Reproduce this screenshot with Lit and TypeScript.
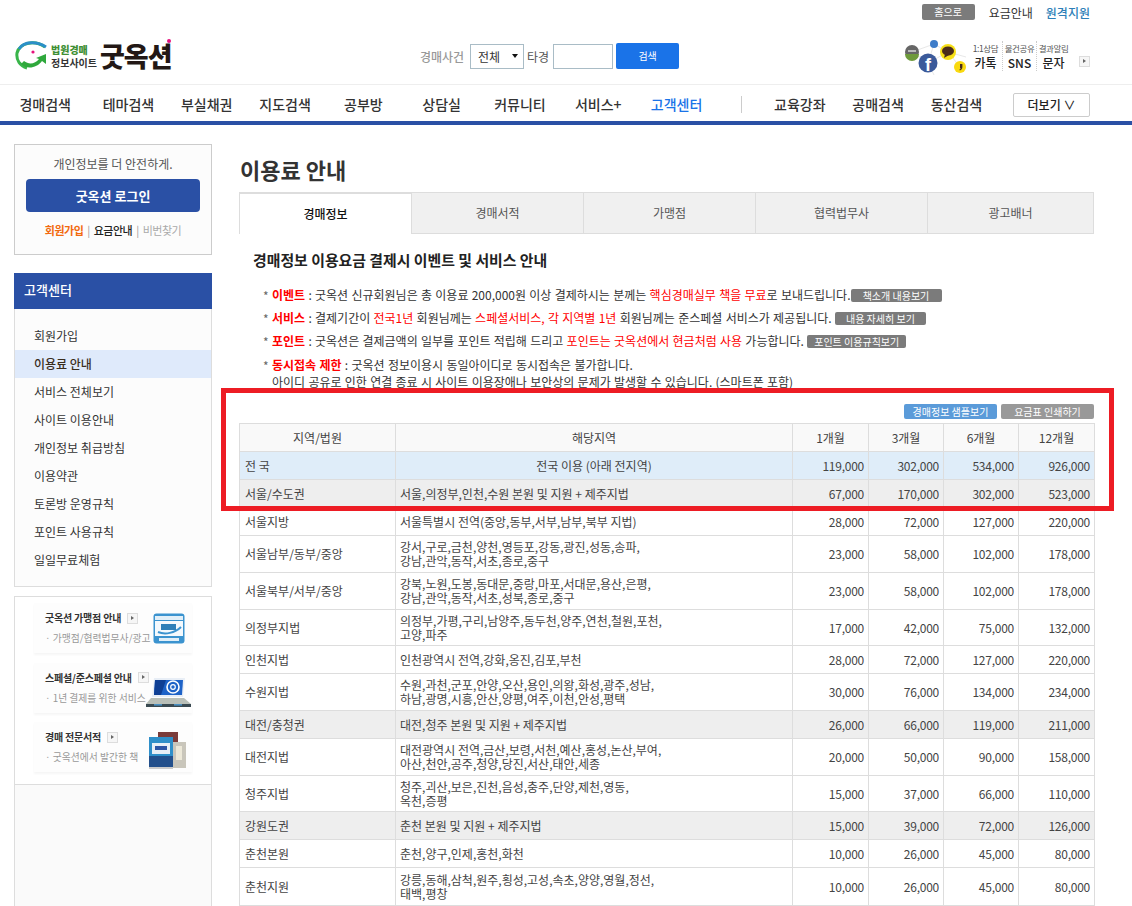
import { LitElement, css, html } from 'lit'
import { customElement } from 'lit/decorators.js'

const navLeft = ['경매검색', '테마검색', '부실채권', '지도검색', '공부방', '상담실', '커뮤니티', '서비스+', '고객센터']
const navRight = ['교육강좌', '공매검색', '동산검색']
const menu = ['회원가입', '이용료 안내', '서비스 전체보기', '사이트 이용안내', '개인정보 취급방침', '이용약관', '토론방 운영규칙', '포인트 사용규칙', '일일무료체험']
const tabs = ['경매정보', '경매서적', '가맹점', '협력법무사', '광고배너']

// kind: '' 일반, all 전국, area 권역
const rows = [
  ['all', '전 국', ['전국 이용 (아래 전지역)'], '119,000', '302,000', '534,000', '926,000'],
  ['area', '서울/수도권', ['서울,의정부,인천,수원 본원 및 지원 + 제주지법'], '67,000', '170,000', '302,000', '523,000'],
  ['', '서울지방', ['서울특별시 전역(중앙,동부,서부,남부,북부 지법)'], '28,000', '72,000', '127,000', '220,000'],
  ['', '서울남부/동부/중앙', ['강서,구로,금천,양천,영등포,강동,광진,성동,송파,', '강남,관악,동작,서초,종로,중구'], '23,000', '58,000', '102,000', '178,000'],
  ['', '서울북부/서부/중앙', ['강북,노원,도봉,동대문,중랑,마포,서대문,용산,은평,', '강남,관악,동작,서초,성북,종로,중구'], '23,000', '58,000', '102,000', '178,000'],
  ['short', '의정부지법', ['의정부,가평,구리,남양주,동두천,양주,연천,철원,포천,', '고양,파주'], '17,000', '42,000', '75,000', '132,000'],
  ['', '인천지법', ['인천광역시 전역,강화,옹진,김포,부천'], '28,000', '72,000', '127,000', '220,000'],
  ['', '수원지법', ['수원,과천,군포,안양,오산,용인,의왕,화성,광주,성남,', '하남,광명,시흥,안산,양평,여주,이천,안성,평택'], '30,000', '76,000', '134,000', '234,000'],
  ['area', '대전/충청권', ['대전,청주 본원 및 지원 + 제주지법'], '26,000', '66,000', '119,000', '211,000'],
  ['', '대전지법', ['대전광역시 전역,금산,보령,서천,예산,홍성,논산,부여,', '아산,천안,공주,청양,당진,서산,태안,세종'], '20,000', '50,000', '90,000', '158,000'],
  ['short', '청주지법', ['청주,괴산,보은,진천,음성,충주,단양,제천,영동,', '옥천,증평'], '15,000', '37,000', '66,000', '110,000'],
  ['area', '강원도권', ['춘천 본원 및 지원 + 제주지법'], '15,000', '39,000', '72,000', '126,000'],
  ['', '춘천본원', ['춘천,양구,인제,홍천,화천'], '10,000', '26,000', '45,000', '80,000'],
  ['tall', '춘천지원', ['강릉,동해,삼척,원주,횡성,고성,속초,양양,영월,정선,', '태백,평창'], '10,000', '26,000', '45,000', '80,000'],
] as [string, string, string[], string, string, string, string][]

@customElement('app-root')
export class AppRoot extends LitElement {
  static styles = css`
    :host {
      display: block;
      position: relative;
      width: 1132px;
      height: 906px;
      overflow: hidden;
      background: #fff;
      color: #333;
      font-family: "Noto Sans CJK KR", "Noto Sans", sans-serif;
      font-size: 12px;
      line-height: 17px;
    }
    .top {
      display: flex;
      justify-content: flex-end;
      align-items: center;
      gap: 13px;
      height: 24px;
      padding-right: 42px;
      box-sizing: border-box;
    }
    .home {
      width: 53px;
      height: 16px;
      margin-right: 1px;
      border-radius: 2px;
      background: #7b7b7b;
      color: #fff;
      font-size: 10px;
      line-height: 16px;
      text-align: center;
    }
    .remote { color: #2d7fb8; font-weight: 500; }
    .brand {
      display: flex;
      align-items: center;
      box-sizing: border-box;
      height: 61px;
      padding: 4px 42px 0 15px;
      border-bottom: 1px solid #eee;
    }
    .logo { display: flex; align-items: center; width: 405px; height: 34px; position: relative; }
    .logo-sub { margin-left: 4px; font-size: 10px; line-height: 13px; font-weight: 700; color: #333; }
    .logo-sub b { display: block; color: #3f8f35; }
    .logo-name { margin-left: 3px; font-size: 27px; line-height: 34px; font-weight: 900; color: #231815; letter-spacing: -1px; }
    .logo-dot { position: absolute; left: 152px; top: 0; width: 4px; height: 4px; border-radius: 50%; background: #e6117d; }
    .search { display: flex; align-items: center; }
    .search-label { color: #999; font-weight: 500; width: 50px; }
    .select {
      display: flex;
      align-items: center;
      justify-content: space-between;
      box-sizing: border-box;
      width: 54px;
      height: 25px;
      padding: 0 5px 0 7px;
      border: 1px solid #a9bcc6;
      color: #333;
    }
    .select i { border: 3px solid transparent; border-top: 4px solid #111; border-bottom: 0; }
    .ta { margin: 0 4px 0 3px; color: #555; }
    .input { box-sizing: border-box; width: 60px; height: 25px; border: 1px solid #a9bcc6; }
    .go {
      width: 63px;
      height: 26px;
      margin-left: 3px;
      border-radius: 2px;
      background: #1a73e8;
      color: #fff;
      font-size: 10px;
      line-height: 26px;
      text-align: center;
    }
    .sns { display: flex; align-items: center; margin-left: auto; }
    .sns-col { width: 33px; padding-top: 1px; text-align: center; border-right: 1px dotted #ccc; }
    .sns-col:last-of-type { border-right: 0; }
    .sns-col small { display: block; font-size: 8.5px; line-height: 12px; color: #555; letter-spacing: -0.4px; white-space: nowrap; }
    .sns-col b { display: block; font-size: 12px; line-height: 17px; font-weight: 500; color: #222; }
    .sns-more { margin: 10px 0 0 9px; }
    .more-btn {
      display: inline-block;
      box-sizing: border-box;
      width: 11px;
      height: 11px;
      border: 1px solid #ddd;
      background: #f6f6f6;
      position: relative;
    }
    .more-btn::after {
      content: '';
      position: absolute;
      left: 3px;
      top: 2px;
      border: 2.5px solid transparent;
      border-left: 3px solid #666;
      border-right: 0;
    }
    .nav {
      display: flex;
      align-items: center;
      height: 33px;
      padding: 3px 42px 0 6px;
      border-bottom: 4px solid #2a50a5;
      font-size: 14px;
      font-weight: 500;
      color: #333;
    }
    .nav a { flex: none; width: 78.3px; text-align: center; white-space: nowrap; }
    .nav a:nth-child(2) { margin-left: 5px; }
    .nav a.on { color: #1a73e8; }
    .nav .sep { width: 1px; height: 17px; margin: 0 19px 0 25px; background: #ccc; }
    .nav .more-nav {
      box-sizing: border-box;
      width: 77px;
      height: 24px;
      margin-left: auto;
      border: 1px solid #ccc;
      border-radius: 2px;
      font-size: 12px;
      line-height: 22px;
      text-align: center;
      color: #222;
    }
    .body { display: flex; padding-left: 14px; }
    .side { flex: none; width: 198px; margin: 19px 27px 0 0; }
    .login {
      box-sizing: border-box;
      height: 111px;
      padding-top: 10px;
      border: 1px solid #ccc;
      background: #fcfcfc;
      text-align: center;
      color: #555;
    }
    .login-btn {
      height: 33px;
      margin: 7px 11px 10px;
      border-radius: 4px;
      background: #2a50a5;
      color: #fff;
      font-size: 13px;
      font-weight: 700;
      line-height: 33px;
    }
    .login-links { font-size: 11px; letter-spacing: -0.5px; color: #999; }
    .login-links i { margin: 0 2px; font-style: normal; }
    .login-links .o { color: #f26a0f; font-weight: 700; }
    .login-links .d { color: #222; font-weight: 500; }
    .login-links .g { color: #aaa; }
    .side-title {
      height: 36px;
      margin-top: 18px;
      padding-left: 10px;
      background: #2a50a5;
      color: #fff;
      font-size: 13px;
      font-weight: 500;
      line-height: 34px;
    }
    .menu {
      height: 278px;
      box-sizing: border-box;
      padding-top: 13px;
      border: 1px solid #ddd;
      border-top: 0;
      background: #fcfcfc;
    }
    .menu a { display: block; height: 28px; padding-left: 19px; line-height: 28px; color: #333; }
    .menu a.on { background: #dfeafb; font-weight: 500; color: #3a2d1c; }
    .promo {
      box-sizing: border-box;
      height: 189px;
      margin-top: 9px;
      padding: 6px 19px 0;
      border: 1px solid #ddd;
    }
    .promo-row {
      position: relative;
      height: 50px;
      margin-bottom: 9.5px;
      background: #fdfdfd;
      box-shadow: 0 2px 2px #f6f6f6;
      font-size: 9.8px;
      line-height: 14px;
    }
    .promo-row b { display: flex; align-items: center; gap: 6px; padding: 8px 0 6px 11px; font-size: 10px; color: #333; white-space: nowrap; letter-spacing: -0.2px; }
    .promo-row span { display: block; padding-left: 11px; color: #999; white-space: nowrap; }
    .promo-row svg { position: absolute; }
    .promo-rest { height: 125px; border: 1px solid #ddd; border-top: 0; background: #fafafa; }
    .main { flex: none; width: 855px; }
    h1 { margin: 29px 0 0 1px; height: 38px; font-size: 22px; line-height: 30px; font-weight: 700; color: #333; }
    .tabs { display: flex; height: 42px; }
    .tabs a {
      box-sizing: border-box;
      width: 172px;
      border: 1px solid #ddd;
      border-left: 0;
      background: #f0f0f0;
      line-height: 40px;
      text-align: center;
      color: #555;
    }
    .tabs a:last-child { width: 166px; }
    .tabs a.on {
      width: 173px;
      border-left: 1px solid #ddd;
      border-bottom: 0;
      border-top-width: 2px;
      background: #fff;
      color: #111;
      font-weight: 500;
    }
    h2 { margin: 14px 0 0 14px; height: 24px; font-size: 14.9px; line-height: 24px; font-weight: 700; color: #222; }
    .notes { margin: 14px 0 0 24px; word-spacing: 0.6px; }
    .note { position: relative; margin-bottom: 6px; padding-left: 9px; white-space: nowrap; }
    .note.last { margin-top: 7px; }
    .note::before { content: '*'; position: absolute; left: 0; top: 1px; color: #666; }
    .note em { font-style: normal; color: #f00; }
    .note strong { color: #f00; font-weight: 700; }
    .tag {
      display: inline-block;
      box-sizing: border-box;
      min-width: 91px;
      height: 13px;
      padding: 0 7px;
      border-radius: 2px;
      background: #7b7b7b;
      color: #fff;
      font-size: 10px;
      line-height: 13px;
      text-align: center;
      word-spacing: 0;
    }
    .tools { display: flex; justify-content: flex-end; gap: 4px; margin-top: 14px; }
    .tools a {
      width: 93px;
      height: 15px;
      border-radius: 2px;
      background: #999;
      color: #fff;
      font-size: 10px;
      line-height: 15px;
      text-align: center;
    }
    .tools a.blue { background: #5b9bd9; }
    table { width: 855px; margin-top: 4px; border-collapse: collapse; table-layout: fixed; color: #444; }
    th, td { border: 1px solid #ddd; padding: 0 4px; height: 27px; line-height: 14px; }
    th { background: #f9f9f9; font-weight: 400; text-align: center; }
    td.name { padding-left: 5px; }
    td.num { text-align: right; letter-spacing: -0.25px; }
    tr.all td { background: #dfedf9; }
    tr.area td { background: #eee; }
    td.center { text-align: center; }
    tr.two td { height: 36px; }
    tr.short td { height: 35px; }
    tr.tall td { height: 37px; }
    .outline {
      position: absolute;
      left: 221px;
      top: 388px;
      box-sizing: border-box;
      width: 893px;
      height: 123px;
      border: 5px solid #ed1c24;
      pointer-events: none;
    }
  `

  logoIcon() {
    return html`<svg width="32" height="30" viewBox="0 0 32 30">
      <path d="M30 6 C20 -1 5 1 2 12 C1 19 5 25 12 27" fill="none" stroke="#39b54a" stroke-width="3"/>
      <path d="M31 6 C22 0 9 0 4 8" fill="none" stroke="#2b8fc9" stroke-width="3"/>
      <path d="M9 20 C14 24 20 23 24 18 L21 17 L31 13 L31 23 L27 20 C22 27 12 29 6 23 Z" fill="#2fa83c"/>
      <circle cx="18" cy="11" r="1.6" fill="#e6117d"/>
    </svg>`
  }

  snsIcons() {
    return html`<svg width="65" height="38" viewBox="0 0 65 38">
      <path d="M8 15 L30 7 M8 15 L24 26 M30 7 L24 26 M44 15 L24 26 M44 15 L56 30 M30 7 L44 15 M24 26 L30 38 M44 15 L62 20" stroke="#e8e8e8" fill="none"/>
      <circle cx="8" cy="15" r="7" fill="#666"/>
      <path d="M1 17 A7 7 0 0 0 15 17 Z" fill="#6f9a3c"/>
      <rect x="4" y="13" width="8" height="2" fill="#bbb"/>
      <circle cx="30" cy="7" r="4" fill="#3d7cc9"/>
      <circle cx="24" cy="26" r="9.5" fill="#3b5a9a"/>
      <text x="21" y="34" font-family="Liberation Sans" font-weight="700" font-size="18" fill="#fff">f</text>
      <circle cx="44" cy="15" r="8" fill="#f7e017"/>
      <ellipse cx="44" cy="14" rx="6" ry="4.6" fill="#4a2c1b"/>
      <path d="M41 17 L40 21 L45 18 Z" fill="#4a2c1b"/>
      <circle cx="56" cy="30" r="6" fill="#f9d90f"/>
      <path d="M56 27 h2.4 v3 c0 2 -1 3 -2.6 3.4 l-0.4 -0.9 c.8 -.4 1.2 -1 1.2 -1.6 h-0.6 Z" fill="#4a2c1b"/>
    </svg>`
  }

  cardIcon() {
    return html`<svg style="left:119px;top:10px" width="32" height="31" viewBox="0 0 32 31">
      <rect x="0.5" y="0.5" width="31" height="30" rx="3" fill="#3b93cf"/>
      <rect x="2" y="3" width="28" height="4" fill="#fff" opacity=".85"/>
      <rect x="2" y="8" width="28" height="15" fill="#f4f9fd"/>
      <path d="M5 19 C12 22 22 20 28 14" stroke="#3b93cf" stroke-width="2" fill="none"/>
      <rect x="8" y="11" width="15" height="6" fill="#2f7fb8"/>
      <rect x="6" y="25" width="20" height="3" fill="#fff" opacity=".85"/>
    </svg>`
  }

  laptopIcon() {
    return html`<svg style="left:112px;top:14px" width="45" height="31" viewBox="0 0 45 31">
      <path d="M8 1 H39 L37 20 H6 Z" fill="#e8eef6"/>
      <path d="M9 3 H37 L36 18 H8 Z" fill="#1e63c8"/>
      <path d="M9 3 H20 L15 18 H8 Z" fill="#0f3f94"/>
      <circle cx="27" cy="10" r="6" fill="none" stroke="#fff" stroke-width="1.6"/>
      <circle cx="27" cy="10" r="2.3" fill="none" stroke="#fff" stroke-width="1.2"/>
      <path d="M5 21 H38 L45 27 H0 Z" fill="#b9bfb8"/>
      <rect x="0" y="27" width="45" height="3" fill="#3a4a52"/>
      <rect x="8" y="27" width="8" height="1.6" fill="#4a90c2"/>
      <rect x="28" y="27" width="8" height="1.6" fill="#4a90c2"/>
    </svg>`
  }

  bookIcon() {
    return html`<svg style="left:115px;top:10px" width="37" height="38" viewBox="0 0 37 38">
      <rect x="9" y="0" width="20" height="30" fill="#7a3b3a"/>
      <rect x="24" y="10" width="13" height="26" fill="#c9c6bb"/>
      <rect x="27" y="14" width="6" height="14" fill="#ece8d8"/>
      <rect x="0" y="5" width="24" height="30" fill="#2f8fc9"/>
      <rect x="3" y="11" width="18" height="11" fill="#e8eff6"/>
      <rect x="6" y="14" width="12" height="4" fill="#2d55a5"/>
      <rect x="0" y="24" width="24" height="11" fill="#23508c"/>
      <rect x="0" y="35" width="24" height="2" fill="#ccc"/>
    </svg>`
  }

  render() {
    return html`
      <div class="top">
        <span class="home">홈으로</span>
        <span>요금안내</span>
        <span class="remote">원격지원</span>
      </div>

      <div class="brand">
        <div class="logo">
          ${this.logoIcon()}
          <div class="logo-sub"><b>법원경매</b>정보사이트</div>
          <div class="logo-name">굿옥션</div>
          <i class="logo-dot"></i>
        </div>
        <div class="search">
          <span class="search-label">경매사건</span>
          <div class="select">전체<i></i></div>
          <span class="ta">타경</span>
          <div class="input"></div>
          <div class="go">검색</div>
        </div>
        <div class="sns">
          ${this.snsIcons()}
          <div class="sns-col"><small>1:1상담</small><b>카톡</b></div>
          <div class="sns-col"><small>물건공유</small><b>SNS</b></div>
          <div class="sns-col"><small>결과알림</small><b>문자</b></div>
          <span class="more-btn sns-more"></span>
        </div>
      </div>

      <div class="nav">
        ${navLeft.map((n) => html`<a class=${n === '고객센터' ? 'on' : ''}>${n}</a>`)}
        <span class="sep"></span>
        ${navRight.map((n) => html`<a>${n}</a>`)}
        <span class="more-nav">더보기 ∨</span>
      </div>

      <div class="body">
        <div class="side">
          <div class="login">
            <div>개인정보를 더 안전하게.</div>
            <div class="login-btn">굿옥션 로그인</div>
            <div class="login-links">
              <span class="o">회원가입</span> <i>|</i> <span class="d">요금안내</span> <i>|</i> <span class="g">비번찾기</span>
            </div>
          </div>

          <div class="side-title">고객센터</div>
          <div class="menu">
            ${menu.map((m) => html`<a class=${m === '이용료 안내' ? 'on' : ''}>${m}</a>`)}
          </div>

          <div class="promo">
            <div class="promo-row">
              <b>굿옥션 가맹점 안내 <i class="more-btn"></i></b>
              <span>· 가맹점/협력법무사/광고</span>
              ${this.cardIcon()}
            </div>
            <div class="promo-row">
              <b>스페셜/준스페셜 안내 <i class="more-btn"></i></b>
              <span>· 1년 결제를 위한 서비스</span>
              ${this.laptopIcon()}
            </div>
            <div class="promo-row">
              <b>경매 전문서적 <i class="more-btn"></i></b>
              <span>· 굿옥션에서 발간한 책</span>
              ${this.bookIcon()}
            </div>
          </div>
          <div class="promo-rest"></div>
        </div>

        <div class="main">
          <h1>이용료 안내</h1>
          <div class="tabs">
            ${tabs.map((t, i) => html`<a class=${i === 0 ? 'on' : ''}>${t}</a>`)}
          </div>

          <h2>경매정보 이용요금 결제시 이벤트 및 서비스 안내</h2>
          <div class="notes">
            <div class="note"><strong>이벤트</strong> : 굿옥션 신규회원님은 총 이용료 200,000원 이상 결제하시는 분께는 <em>핵심경매실무 책을 무료</em>로 보내드립니다.<span class="tag">책소개 내용보기</span></div>
            <div class="note"><strong>서비스</strong> : 결제기간이 <em>전국1년</em> 회원님께는 <em>스페셜서비스, 각 지역별 1년</em> 회원님께는 준스페셜 서비스가 제공됩니다. <span class="tag">내용 자세히 보기</span></div>
            <div class="note"><strong>포인트</strong> : 굿옥션은 결제금액의 일부를 포인트 적립해 드리고 <em>포인트는 굿옥션에서 현금처럼 사용</em> 가능합니다. <span class="tag">포인트 이용규칙보기</span></div>
            <div class="note last"><strong>동시접속 제한</strong> : 굿옥션 정보이용시 동일아이디로 동시접속은 불가합니다.<br>아이디 공유로 인한 연결 종료 시 사이트 이용장애나 보안상의 문제가 발생할 수 있습니다. (스마트폰 포함)</div>
          </div>

          <div class="tools">
            <a class="blue">경매정보 샘플보기</a>
            <a>요금표 인쇄하기</a>
          </div>

          <table>
            <colgroup>
              <col style="width:156px"><col style="width:397px"><col style="width:76px"><col style="width:75px"><col style="width:75px"><col style="width:76px">
            </colgroup>
            <tr><th>지역/법원</th><th>해당지역</th><th>1개월</th><th>3개월</th><th>6개월</th><th>12개월</th></tr>
            ${rows.map(([kind, name, areas, a, b, c, d]) => html`
              <tr class="${areas.length > 1 ? 'two' : ''} ${kind}">
                <td class="name">${name}</td>
                <td class=${kind === 'all' ? 'center' : ''}>${areas.map((l, i) => html`${i ? html`<br>` : ''}${l}`)}</td>
                <td class="num">${a}</td><td class="num">${b}</td><td class="num">${c}</td><td class="num">${d}</td>
              </tr>`)}
          </table>
        </div>
      </div>

      <div class="outline"></div>
    `
  }
}
